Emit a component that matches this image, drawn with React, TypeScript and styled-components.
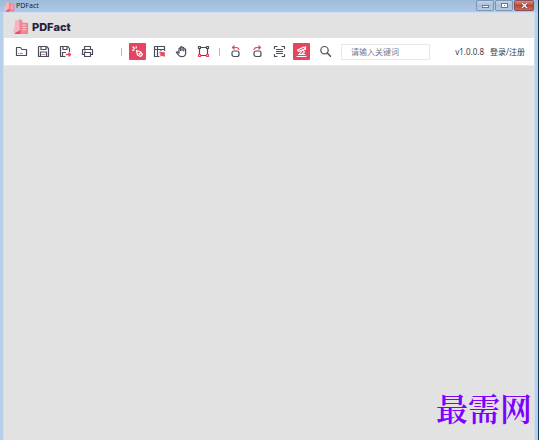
import React from 'react';
import styled, { createGlobalStyle } from 'styled-components';

const INK = '#4a4e5c';
const RED = '#e5455f';

const GlobalStyle = createGlobalStyle`
  * { box-sizing: border-box; }
  body { margin: 0; background: #fff; font-family: "Noto Sans", "Noto Sans CJK SC", sans-serif; }
  button, input { font-family: inherit; }
`;

const Page = styled.div`
  display: flex;
  min-height: 100vh;
  padding-right: 10px;
`;

const Window = styled.div`
  flex: 1;
  display: flex;
  flex-direction: column;
  background: #b8cfe9;
  border-right: 1px solid #16354f;
`;

const TitleBar = styled.header`
  display: flex;
  align-items: center;
  height: 12px;
  padding: 0 4px;
  gap: 1px;
  background: linear-gradient(#9ebbd9, #aec9e7);
`;

const WindowTitle = styled.span`
  flex: 1;
  font-size: 7px;
  line-height: 12px;
  color: #20252d;
`;

const WindowControls = styled.div`
  display: flex;
  align-self: flex-start;
  gap: 1px;
`;

const ControlButton = styled.button<{ $close?: boolean }>`
  display: flex;
  align-items: center;
  justify-content: center;
  width: ${p => (p.$close ? 20 : 18)}px;
  height: 11px;
  padding: 0;
  border: 1px solid ${p => (p.$close ? '#8b5058' : '#7f95b1')};
  border-radius: 2px;
  background: ${p => (p.$close ? 'linear-gradient(#d69283, #bd4734 50%, #cd6654)' : 'linear-gradient(#c2d5ea, #a5bfdb 50%, #b5cde7)')};
`;

const Client = styled.main`
  flex: 1;
  display: flex;
  flex-direction: column;
  margin: 0 3px;
  border: 1px solid #cfdff0;
  border-bottom: 0;
  background: #e2e2e2;
`;

const Brand = styled.div`
  display: flex;
  align-items: center;
  height: 25px;
  padding: 2px 8px 0;
  gap: 3px;
`;

const BrandName = styled.h1`
  margin: 0;
  font: 800 11px/16px Inter, sans-serif;
  color: #22233f;
`;

const Toolbar = styled.nav`
  display: flex;
  align-items: center;
  height: 27px;
  padding: 0 9px;
  background: #fff;
`;

const ToolGroup = styled.div`
  display: flex;
  gap: 5px;
`;

const ToolButton = styled.button<{ $active?: boolean }>`
  display: flex;
  align-items: center;
  justify-content: center;
  width: 17px;
  height: 17px;
  padding: 0;
  border: 0;
  border-radius: 1px;
  background: ${p => (p.$active ? RED : 'transparent')};
  color: ${p => (p.$active ? '#fff' : INK)};
`;

const Separator = styled.span<{ $wide?: boolean }>`
  width: 1px;
  height: 8px;
  margin: 0 7px 0 ${p => (p.$wide ? 25 : 7)}px;
  background: #b9bac0;
`;

const SearchButton = styled(ToolButton)`
  margin-left: 7px;
`;

const SearchInput = styled.input`
  width: 89px;
  height: 16px;
  margin-left: 7px;
  padding: 0 9px;
  border: 1px solid #e8e8ec;
  background: #fff;
  font-size: 8px;
  color: ${INK};
  &::placeholder { color: #747a92; opacity: 1; }
`;

const Account = styled.div`
  display: flex;
  gap: 6px;
  margin-left: auto;
  font-size: 8px;
  line-height: 16px;
  white-space: nowrap;
  color: #3c3d42;
`;

const AccountLink = styled.a`
  color: inherit;
  text-decoration: none;
`;

const Workspace = styled.section`
  flex: 1;
  display: flex;
  align-items: flex-end;
  justify-content: flex-end;
  padding: 0 2px 11px;
  border-top: 1px solid #ececec;
`;

const Watermark = styled.p`
  margin: 0;
  font: 600 32px/44px "Noto Serif CJK SC", "Noto Sans CJK SC", serif;
  color: #8000ff;
`;

const Logo = ({ size }: { size: number }) => (
  <svg width={size} height={size} viewBox="0 0 18 18" aria-hidden="true">
    <path d="M1 11 L4 8 V16 H1z" fill="#f8c5cc" />
    <path d="M3 3 L9 1 V14 L3 16z" fill="#f6b4bd" />
    <path d="M8 1 L11 3 V5 H17 V17 H3 L8 13z" fill="#ee8494" />
    <path d="M11 7.500h4M11 10h4M11 12.500h4" stroke="#fbd9dd" strokeWidth="1" />
    <path d="M3 16L9 13V17H3z" fill="#e94e66" />
  </svg>
);

const Icon = ({ children }: { children: React.ReactNode }) => (
  <svg width="13" height="13" viewBox="0 0 13 13" fill="none" stroke="currentColor" strokeWidth="1.200" strokeLinecap="round" strokeLinejoin="round" aria-hidden="true">
    {children}
  </svg>
);

const icons = {
  open: <Icon><path d="M1.500 10.500V2.500H5.500L7 4.500H11.500V10.500z" /><path d="M3.500 8.500h.4M5.400 8.500h2" stroke={RED} strokeWidth=".9" /></Icon>,
  save: <Icon><path d="M2 1.500H9.500L11.500 3.500V11.500H1.500V2z" /><path d="M4 1.500V4.500H9V1.500M3.500 11.500V7H9.500V11.500" /><path d="M5 9.500h3" stroke="#ce8a96" /></Icon>,
  saveAs: <Icon><path d="M6 11.500H1.500V1.500H9L10.500 3.500V6.500M4 1.500V4.500H8V1.500M3.500 11.500V7.500H6.500" /><path d="M7.500 9.500h4M10 8L11.500 9.500 10 11" stroke={RED} strokeWidth="1.400" /></Icon>,
  print: <Icon><path d="M3.500 4V1.500H9.500V4M3.500 9.500H1.500V4.500H11.500V9.500H9.500M3.500 7.500H9.500V11.500H3.500z" /><path d="M3.400 6h1" stroke={RED} /></Icon>,
  select: <Icon><path d="M5.500 5.500L9 6.500 11.500 9.500 9.500 11.500 6.500 10z" /><path d="M2 2L3.500 3.500M5.200 1.500V3M1.500 5.200H3" /><circle cx="8.600" cy="8.800" r=".5" fill="currentColor" /></Icon>,
  edit: <Icon><path d="M11.500 5.500V1.500H1.500V11.500H6M1.500 4.500H11.500M4.500 1.500V11.500M8 4.500V5.500" /><path d="M7 7L11.500 7.500V11.500L9.500 10.500 8 11z" fill={RED} stroke={RED} strokeWidth=".6" /></Icon>,
  hand: <Icon><path d="M4 8V3.500Q4.800 2.500 5.500 3.500V5.500V2.200Q6.300 1.200 7.100 2.200V5.500V2.700Q8 1.800 8.800 2.900V6V4.200Q9.900 3.200 10.600 4.400V8.500Q10.200 11.700 7 11.700Q4.500 11.700 3.300 9.800L1.300 7.200Q2.300 6 4 8z" /></Icon>,
  crop: <Icon><path d="M3.500 2.500H9.500M3.500 10.500H9.500M2.500 3.500V9.500M10.500 3.500V9.500" /><path d="M1.500 1.500h2v2h-2zM9.500 1.500h2v2h-2z" /><path d="M1.500 9.500h2v2h-2zM9.500 9.500h2v2h-2z" stroke={RED} /></Icon>,
  left: <Icon><rect x="3" y="6" width="7" height="5.500" rx="2" /><path d="M10 4.500Q9.500 2.500 7 2.500H3.500M5.200 1L3.500 2.500 5.200 4" stroke={RED} /></Icon>,
  right: <Icon><rect x="3" y="6" width="7" height="5.500" rx="2" /><path d="M3 4.500Q3.500 2.500 6 2.500H9.500M7.800 1L9.500 2.500 7.800 4" stroke={RED} /></Icon>,
  scan: <Icon><path d="M1.500 3.500V1.500H4M9 1.500H11.500V3.500M1.500 9.500V11.500H4M9 11.500H11.500V9.500" /><path d="M3.500 4.500H9.500M3.500 6.500H9.500M3.500 8.500H9.500" /></Icon>,
  tool: <Icon><path d="M2.500 5L9 2 10 4 3.500 6.500z" /><path d="M10.500 1.500V4.500M7 5.500L4.500 9M8 5L9.500 7 7 9M3.500 9.500H10M2 11.500H11" /></Icon>,
  search: <Icon><circle cx="5.500" cy="5.200" r="3.700" /><path d="M8.300 8L11.500 11.300" strokeWidth="1.400" /></Icon>,
};

type Tool = { icon: keyof typeof icons; label: string; active?: boolean };

const groups: Tool[][] = [
  [{ icon: 'open', label: '打开' }, { icon: 'save', label: '保存' }, { icon: 'saveAs', label: '另存为' }, { icon: 'print', label: '打印' }],
  [{ icon: 'select', label: '选择', active: true }, { icon: 'edit', label: '编辑' }, { icon: 'hand', label: '手形' }, { icon: 'crop', label: '裁剪' }],
  [{ icon: 'left', label: '向左旋转' }, { icon: 'right', label: '向右旋转' }, { icon: 'scan', label: '识别' }, { icon: 'tool', label: '工具', active: true }],
];

export default function App() {
  return (
    <Page>
      <GlobalStyle />
      <Window>
        <TitleBar>
          <Logo size={11} />
          <WindowTitle>PDFact</WindowTitle>
          <WindowControls>
            <ControlButton aria-label="最小化"><svg width="9" height="7"><rect x="1.500" y="3.500" width="6" height="2" fill="#fff" stroke="#677891" /></svg></ControlButton>
            <ControlButton aria-label="最大化"><svg width="9" height="7"><rect x="1.500" y="1.500" width="6" height="4" fill="#fff" stroke="#677891" /><path d="M4 3.500h1" stroke="#677891" /></svg></ControlButton>
            <ControlButton $close aria-label="关闭"><svg width="9" height="7"><path d="M2 1l5 5M7 1L2 6" stroke="#6e3438" strokeWidth="2.500" /><path d="M2 1l5 5M7 1L2 6" stroke="#fff" strokeWidth="1.400" /></svg></ControlButton>
          </WindowControls>
        </TitleBar>
        <Client>
          <Brand>
            <Logo size={17} />
            <BrandName>PDFact</BrandName>
          </Brand>
          <Toolbar>
            {groups.map((tools, i) => (
              <React.Fragment key={i}>
                {i > 0 && <Separator $wide={i === 1} />}
                <ToolGroup>
                  {tools.map(t => (
                    <ToolButton key={t.icon} $active={t.active} aria-label={t.label}>{icons[t.icon]}</ToolButton>
                  ))}
                </ToolGroup>
              </React.Fragment>
            ))}
            <SearchButton aria-label="搜索">{icons.search}</SearchButton>
            <SearchInput type="text" placeholder="请输入关键词" aria-label="关键词" />
            <Account>
              <span>v1.0.0.8</span>
              <AccountLink href="#login">登录/注册</AccountLink>
            </Account>
          </Toolbar>
          <Workspace>
            <Watermark>最需网</Watermark>
          </Workspace>
        </Client>
      </Window>
    </Page>
  );
}
